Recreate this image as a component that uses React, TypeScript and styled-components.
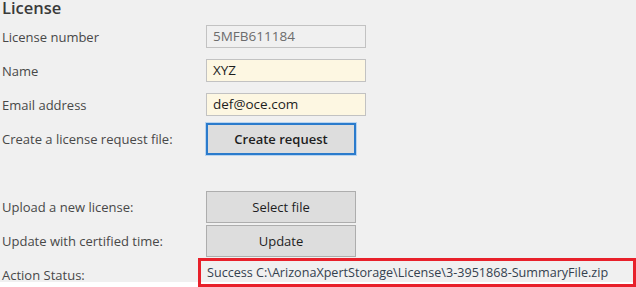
import React from 'react'
import styled, { createGlobalStyle } from 'styled-components'

const GlobalStyle = createGlobalStyle`
  html, body {
    margin: 0;
    padding: 0;
    background: #ffffff;
    overflow: hidden;
  }
  body {
    font-family: "Open Sans", "Noto Sans", "Liberation Sans", sans-serif;
  }
`

const Page = styled.div`
  width: 636px;
  height: 287px;
  position: relative;
  overflow: hidden;
`

const Panel = styled.div`
  background: #f0f0f0;
  height: 282px;
  display: flex;
  flex-direction: column;
  overflow: visible;
`

const Title = styled.div`
  height: 19.5px;
  flex-shrink: 0;
  padding-left: 2px;
  font-size: 16.5px;
  font-weight: 600;
  line-height: 16px;
  color: #3a3a3a;
`

const Row = styled.div`
  display: grid;
  grid-template-columns: 206px 1fr;
  align-items: center;
  height: 34px;
  flex-shrink: 0;
`

const Spacer = styled.div`
  height: 34px;
  flex-shrink: 0;
`

const Label = styled.div`
  padding-left: 2px;
  font-size: 13px;
  color: #484848;
  white-space: nowrap;
`

const Field = styled.div<{ $editable?: boolean }>`
  width: 160px;
  height: 23px;
  box-sizing: border-box;
  border: 1.5px solid #c2c2c2;
  background: ${(p) => (p.$editable ? '#fdf7e2' : '#f0f0f0')};
  color: ${(p) => (p.$editable ? '#1e1e1e' : '#6c6c6c')};
  font-size: 13.5px;
  line-height: 20px;
  padding-left: 6px;
`

const Button = styled.div<{ $focused?: boolean }>`
  width: 150px;
  height: 32px;
  box-sizing: border-box;
  display: flex;
  align-items: center;
  justify-content: center;
  background: #dddddd;
  border: ${(p) => (p.$focused ? '2px solid #2b7bcc' : '1.5px solid #adadad')};
  box-shadow: ${(p) => (p.$focused ? '0 0 0 1px #b9d4ef' : 'none')};
  font-size: 13px;
  font-weight: ${(p) => (p.$focused ? 600 : 400)};
  color: #1e1e1e;
`

const StatusBox = styled.div`
  position: absolute;
  left: 198px;
  top: 258px;
  width: 438px;
  height: 29px;
  box-sizing: border-box;
  border: 3px solid #e8202a;
  display: flex;
  align-items: center;
  padding-left: 6px;
  font-size: 12.6px;
  color: #34414f;
  white-space: nowrap;
  background: linear-gradient(#f0f0f0 0 21px, #ffffff 21px);
`

export default function App() {
  return (
    <Page>
      <GlobalStyle />
      <Panel>
        <Title>License</Title>
        <Row>
          <Label>License number</Label>
          <Field>5MFB611184</Field>
        </Row>
        <Row>
          <Label>Name</Label>
          <Field $editable>XYZ</Field>
        </Row>
        <Row>
          <Label>Email address</Label>
          <Field $editable>def@oce.com</Field>
        </Row>
        <Row>
          <Label>Create a license request file:</Label>
          <Button $focused>Create request</Button>
        </Row>
        <Spacer />
        <Row>
          <Label>Upload a new license:</Label>
          <Button>Select file</Button>
        </Row>
        <Row>
          <Label>Update with certified time:</Label>
          <Button>Update</Button>
        </Row>
        <Row>
          <Label>Action Status:</Label>
        </Row>
      </Panel>
      <StatusBox>Success C:\ArizonaXpertStorage\License\3-3951868-SummaryFile.zip</StatusBox>
    </Page>
  )
}
